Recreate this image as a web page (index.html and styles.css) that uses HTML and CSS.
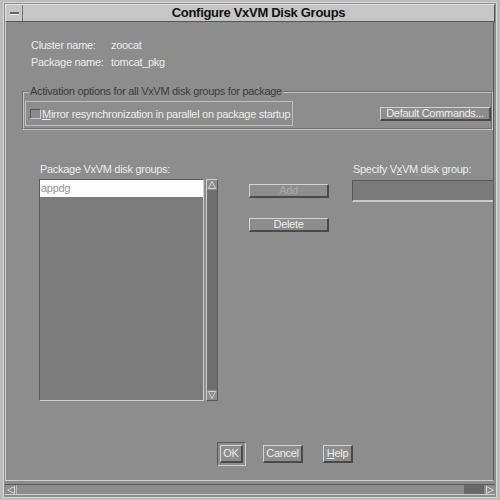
FILE: index.html
```html
<!DOCTYPE html>
<html lang="en">
<head>
    <meta charset="UTF-8">
    <title>Configure VxVM Disk Groups</title>
    <link rel="stylesheet" href="styles.css">
</head>
<body>
    <div class="window">
        <!-- Motif title bar -->
        <div class="titlebar">
            <div class="menu-btn"><span></span></div>
            <div class="title">Configure VxVM Disk Groups</div>
        </div>

        <div class="dialog">
            <div class="info">
                <div class="info-row"><span class="info-label">Cluster name:</span><span>zoocat</span></div>
                <div class="info-row"><span class="info-label">Package name:</span><span>tomcat_pkg</span></div>
            </div>

            <fieldset class="group">
                <legend>Activation options for all VxVM disk groups for package</legend>
                <label class="toggle">
                    <span class="check"></span>
                    <span><u>M</u>irror resynchronization in parallel on package startup</span>
                </label>
                <button class="btn btn-wide">Default Commands...</button>
            </fieldset>

            <div class="main">
                <div class="col-list">
                    <div class="caption">Package VxVM disk groups:</div>
                    <div class="list-wrap">
                        <ul class="list">
                            <li class="selected">appdg</li>
                        </ul>
                        <div class="vscroll">
                            <div class="arrow">
                                <svg width="8" height="8" viewBox="0 0 8 8"><path d="M4 0.5 L7.5 7.5 L0.5 7.5 Z" fill="none" stroke="#d4d4d4" stroke-width="1"/></svg>
                            </div>
                            <div class="trough"></div>
                            <div class="arrow">
                                <svg width="8" height="8" viewBox="0 0 8 8"><path d="M4 7.5 L7.5 0.5 L0.5 0.5 Z" fill="none" stroke="#d4d4d4" stroke-width="1"/></svg>
                            </div>
                        </div>
                    </div>
                </div>

                <div class="col-buttons">
                    <button class="btn btn-side disabled">Add</button>
                    <button class="btn btn-side">Delete</button>
                </div>

                <div class="col-field">
                    <div class="caption">Specify V<u>x</u>VM disk group:</div>
                    <div class="field"></div>
                </div>
            </div>

            <div class="actions">
                <div class="default-ring"><button class="btn btn-ok">OK</button></div>
                <button class="btn btn-cancel">Cancel</button>
                <button class="btn btn-help"><u>H</u>elp</button>
            </div>
        </div>

        <!-- horizontal scrollbar of the window -->
        <div class="hscroll">
            <div class="harrow">
                <svg width="8" height="8" viewBox="0 0 8 8"><path d="M0.5 4 L7.5 0.5 L7.5 7.5 Z" fill="none" stroke="#d4d4d4" stroke-width="1"/></svg>
            </div>
            <div class="htrough"><div class="hslider"></div></div>
            <div class="harrow">
                <svg width="8" height="8" viewBox="0 0 8 8"><path d="M7.5 4 L0.5 0.5 L0.5 7.5 Z" fill="none" stroke="#d4d4d4" stroke-width="1"/></svg>
            </div>
        </div>
    </div>
</body>
</html>
```

FILE: styles.css
```css
body {
    margin: 0;
    padding: 0;
    background-color: #bcbcbc;
    font-family: "Liberation Sans", Arial, sans-serif;
    font-size: 11px;
    letter-spacing: -0.3px;
    color: #ececec;
}

.window {
    width: 492px;
    height: 494px;
    margin: 2px 0 0 3px;
    border: 1px solid #d6d6d6;
    background-color: #8d8d8d;
    display: flex;
    flex-direction: column;
}

/* Title bar */
.titlebar {
    height: 16px;
    margin: 1px 1px 0 1px;
    display: flex;
    background-color: #c6c6c6;
    border-top: 1px solid #e4e4e4;
    border-left: 1px solid #e4e4e4;
    border-bottom: 1px solid #555;
    border-right: 1px solid #555;
}

.menu-btn {
    width: 16px;
    display: flex;
    align-items: center;
    justify-content: center;
    border-right: 1px solid #777;
}

.menu-btn span {
    width: 9px;
    height: 2px;
    background-color: #666;
    border-bottom: 1px solid #eee;
}

.title {
    flex: 1;
    text-align: center;
    font-weight: bold;
    font-size: 13px;
    line-height: 16px;
    color: #111;
}

/* Dialog body */
.dialog {
    flex: 1;
    margin: 0 2px 0 1px;
    border-left: 1px solid #cfcfcf;
    border-bottom: 1px solid #cfcfcf;
    border-right: 1px solid #5a5a5a;
    display: flex;
    flex-direction: column;
}

.info {
    padding: 15px 0 0 25px;
}

.info-row {
    line-height: 17px;
    display: flex;
}

.info-label {
    width: 80px;
}

.group {
    margin: 14px 0 0 16px;
    padding: 3px 0 2px 1px;
    border: 2px groove #c4c4c4;
    display: flex;
    align-items: center;
}

.group legend {
    margin-left: 4px;
    padding: 0 1px;
    line-height: 13px;
    color: #3c3c3c;
}

.toggle {
    width: 262px;
    height: 23px;
    border: 1px solid #bfbfbf;
    display: flex;
    align-items: center;
    gap: 1px;
    padding-left: 4px;
    white-space: nowrap;
}

.check {
    flex-shrink: 0;
    width: 9px;
    height: 8px;
    border-top: 1px solid #555;
    border-left: 1px solid #555;
    border-bottom: 1px solid #d0d0d0;
    border-right: 1px solid #d0d0d0;
    background-color: #8a8a8a;
}

.btn {
    font-family: "Liberation Sans", Arial, sans-serif;
    font-size: 11px;
    letter-spacing: -0.3px;
    color: #ececec;
    background-color: #8d8d8d;
    border-top: 1px solid #d2d2d2;
    border-left: 1px solid #d2d2d2;
    border-bottom: 2px solid #4a4a4a;
    border-right: 2px solid #4a4a4a;
    padding: 0;
    line-height: 11px;
}

.btn-wide {
    margin-left: auto;
    width: 111px;
    height: 14px;
}

/* List area */
.main {
    margin-top: 33px;
    padding-left: 33px;
    display: flex;
    align-items: flex-start;
}

.caption {
    line-height: 13px;
    padding-left: 1px;
    white-space: nowrap;
}

.col-list {
    width: 179px;
}

.list-wrap {
    margin-top: 3px;
    height: 222px;
    display: flex;
    gap: 2px;
}

.list {
    list-style: none;
    margin: 0;
    padding: 0;
    width: 163px;
    border-top: 1px solid #5a5a5a;
    border-left: 1px solid #5a5a5a;
    border-bottom: 1px solid #cfcfcf;
    border-right: 1px solid #cfcfcf;
    background-color: #7c7c7c;
}

.list li {
    height: 17px;
    line-height: 17px;
    padding-left: 1px;
    color: #979797;
}

.list li.selected {
    background-color: #fdfdfd;
}

.vscroll {
    width: 10px;
    border-top: 1px solid #cfcfcf;
    border-left: 1px solid #cfcfcf;
    border-bottom: 1px solid #5a5a5a;
    border-right: 1px solid #5a5a5a;
    display: flex;
    flex-direction: column;
    background-color: #6e6e6e;
}

.arrow {
    height: 10px;
    display: flex;
    align-items: center;
    justify-content: center;
    background-color: #8d8d8d;
}

.trough {
    flex: 1;
}

.col-buttons {
    margin: 21px 0 0 31px;
    width: 80px;
    display: flex;
    flex-direction: column;
    gap: 20px;
}

.btn-side {
    height: 14px;
}

.btn.disabled {
    color: #a9a9a9;
}

.col-field {
    margin-left: 23px;
    flex: 1;
}

.field {
    margin-top: 4px;
    height: 19px;
    border-top: 1px solid #5a5a5a;
    border-left: 1px solid #5a5a5a;
    border-bottom: 2px solid #c8c8c8;
    background-color: #7a7a7a;
}

/* OK / Cancel / Help */
.actions {
    margin-top: 41px;
    padding-left: 211px;
    display: flex;
    align-items: center;
}

.default-ring {
    padding: 2px;
    border-top: 1px solid #5a5a5a;
    border-left: 1px solid #5a5a5a;
    border-bottom: 1px solid #cfcfcf;
    border-right: 1px solid #cfcfcf;
}

.btn-ok {
    width: 23px;
    height: 18px;
}

.btn-cancel {
    margin-left: 17px;
    width: 40px;
    height: 18px;
}

.btn-help {
    margin-left: 20px;
    width: 30px;
    height: 18px;
}

/* Window scrollbar */
.hscroll {
    height: 9px;
    margin: 3px 1px 2px 1px;
    display: flex;
    border-top: 1px solid #5a5a5a;
    border-bottom: 1px solid #cfcfcf;
    background-color: #8d8d8d;
}

.harrow {
    width: 11px;
    display: flex;
    align-items: center;
    justify-content: center;
}

.htrough {
    flex: 1;
    display: flex;
    justify-content: flex-end;
    border-left: 1px solid #bbb;
}

.hslider {
    width: 20px;
    background-color: #686868;
}
```
